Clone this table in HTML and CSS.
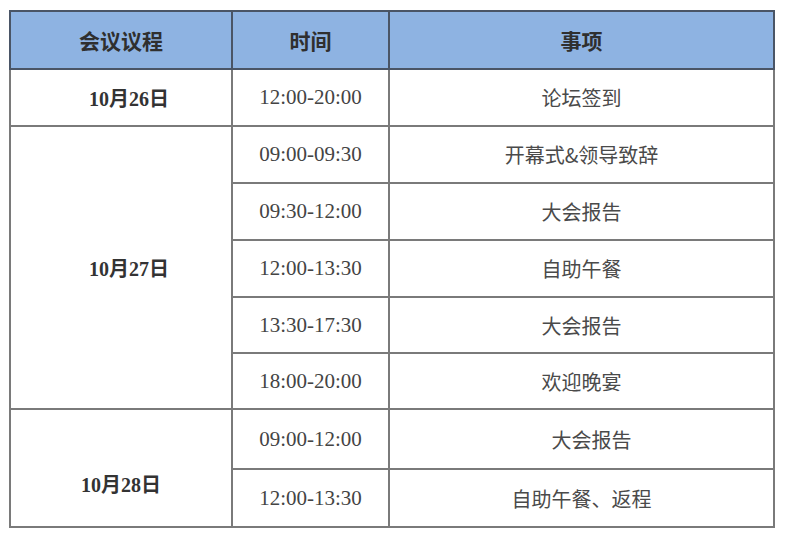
FILE: index.html
```html
<!DOCTYPE html>
<html lang="zh-CN">
<head>
<meta charset="utf-8">
<link rel="stylesheet" href="styles.css">
</head>
<body>
<table class="agenda">
  <colgroup>
    <col class="c-date">
    <col class="c-time">
    <col class="c-item">
  </colgroup>
  <thead>
    <tr class="head">
      <th>会议议程</th>
      <th>时间</th>
      <th>事项</th>
    </tr>
  </thead>
  <tbody>
    <tr class="r57">
      <td class="date right">10月26日</td>
      <td class="time">12:00-20:00</td>
      <td class="item">论坛签到</td>
    </tr>
    <tr class="r57">
      <td class="date right" rowspan="5">10月27日</td>
      <td class="time">09:00-09:30</td>
      <td class="item">开幕式&amp;领导致辞</td>
    </tr>
    <tr class="r57">
      <td class="time">09:30-12:00</td>
      <td class="item">大会报告</td>
    </tr>
    <tr class="r57">
      <td class="time">12:00-13:30</td>
      <td class="item">自助午餐</td>
    </tr>
    <tr class="r56">
      <td class="time">13:30-17:30</td>
      <td class="item">大会报告</td>
    </tr>
    <tr class="r56">
      <td class="time">18:00-20:00</td>
      <td class="item">欢迎晚宴</td>
    </tr>
    <tr class="r60">
      <td class="date low" rowspan="2">10月28日</td>
      <td class="time">09:00-12:00</td>
      <td class="item shift">大会报告</td>
    </tr>
    <tr class="r58">
      <td class="time">12:00-13:30</td>
      <td class="item">自助午餐、返程</td>
    </tr>
  </tbody>
</table>
</body>
</html>
```

FILE: styles.css
```css
html, body {
  margin: 0;
  padding: 0;
  background: #ffffff;
}

body {
  padding: 10px 0 0 9px;
  font-family: "Liberation Serif", "Noto Sans CJK SC", serif;
  color: #454545;
}

.agenda {
  border-collapse: collapse;
  table-layout: fixed;
  width: 764px;
  border: 2px solid #6a6a6a;
}

.c-date { width: 222px; }
.c-time { width: 157px; }
.c-item { width: 385px; }

.agenda th,
.agenda td {
  border: 2px solid #7a7a7a;
  text-align: center;
  vertical-align: middle;
  padding: 0;
}

.head {
  height: 58px;
  background: #8eb3e2;
}

.agenda th {
  border-color: #4a5566;
  font-family: "Noto Sans CJK SC", sans-serif;
  font-weight: 700;
  font-size: 21px;
  color: #2f2f2f;
}

.r56 { height: 56px; }
.r57 { height: 57px; }
.r58 { height: 58px; }
.r60 { height: 60px; }

.date {
  font-family: "Liberation Serif", "Noto Sans CJK SC", serif;
  font-weight: 700;
  font-size: 20px;
  color: #333333;
}

.date.right {
  padding-left: 16px;
}

.date.low {
  padding-top: 30px;
}

.time {
  font-size: 21px;
  color: #444444;
}

.item {
  font-family: "Noto Sans CJK SC", sans-serif;
  font-size: 20px;
  color: #4a4a4a;
}

.item.shift {
  padding-left: 20px;
}
```
